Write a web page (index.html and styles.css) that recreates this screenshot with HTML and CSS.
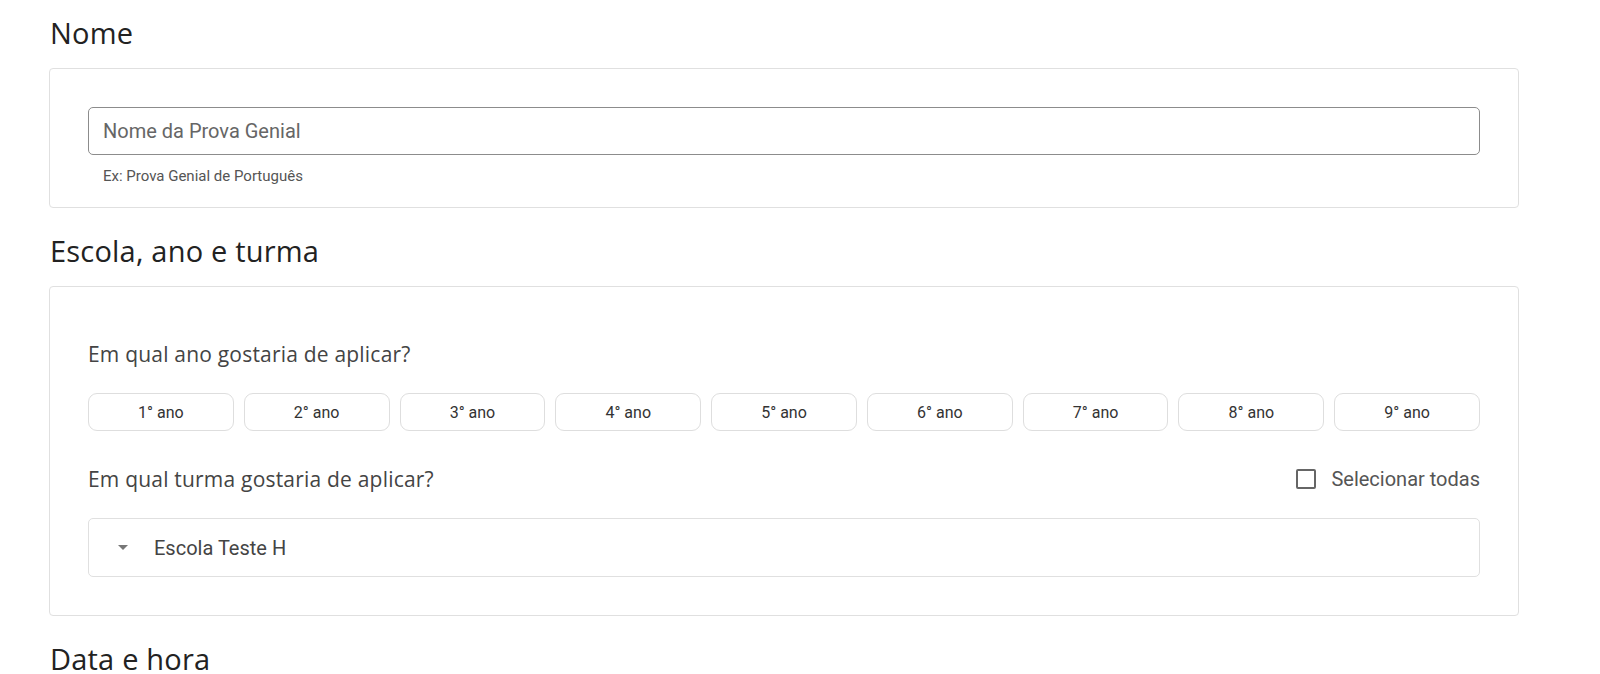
FILE: index.html
```html
<!DOCTYPE html>
<html lang="pt-BR">
<head>
  <meta charset="UTF-8" />
  <title>Prova Genial - Nova prova</title>
  <link rel="stylesheet" href="styles.css">
</head>
<body>

  <div class="page">
    <!-- Nome -->
    <h2 class="section-title">Nome</h2>
    <div class="card">
      <input type="text" class="text-input" placeholder="Nome da Prova Genial">
      <div class="helper">Ex: Prova Genial de Português</div>
    </div>

    <!-- Escola, ano e turma -->
    <h2 class="section-title">Escola, ano e turma</h2>
    <div class="card">
      <p class="question first">Em qual ano gostaria de aplicar?</p>
      <div class="years" id="years"></div>

      <div class="class-row">
        <p class="question">Em qual turma gostaria de aplicar?</p>
        <label class="check-all">
          <span class="checkbox"></span>
          Selecionar todas
        </label>
      </div>

      <div class="school-box">
        <span class="caret"></span>
        <span class="school-name">Escola Teste H</span>
      </div>
    </div>

    <!-- Data e hora -->
    <h2 class="section-title">Data e hora</h2>
  </div>

  <script>
    const years = document.getElementById("years");
    for (let i = 1; i <= 9; i++) {
      const btn = document.createElement("button");
      btn.className = "year-btn";
      btn.textContent = i + "° ano";
      years.appendChild(btn);
    }
  </script>
</body>
</html>
```

FILE: styles.css
```css
body {
  margin: 0;
  background: #fff;
  font-family: "Open Sans", sans-serif;
  overflow: hidden;
}

.page {
  padding: 0 81px 0 49px;
}

.section-title {
  margin: 0 0 0 1px;
  padding: 13px 0 15px 0;
  line-height: 40px;
  font-size: 29px;
  font-weight: 400;
  color: #222;
  letter-spacing: 0.2px;
}

.card {
  border: 1px solid #e0e0e0;
  border-radius: 4px;
  padding: 38px;
  margin-bottom: 10px;
}

.card:first-of-type {
  padding-bottom: 0;
  height: 140px;
  box-sizing: border-box;
}

.text-input {
  display: block;
  width: 100%;
  height: 48px;
  box-sizing: border-box;
  border: 1px solid #8c8c8c;
  border-radius: 5px;
  padding: 0 14px;
  font-family: Roboto, sans-serif;
  font-size: 20px;
  color: #333;
  outline: none;
}

.text-input::placeholder {
  color: #666;
}

.helper {
  margin-top: 12px;
  padding-left: 15px;
  line-height: 18px;
  font-family: Roboto, sans-serif;
  font-size: 15px;
  color: #555;
}

.question {
  margin: 0;
  font-size: 21px;
  line-height: 30px;
  letter-spacing: 0.2px;
  color: #444;
}

.question.first {
  margin-top: 14px;
}

.years {
  display: flex;
  gap: 10px;
  margin-top: 24px;
}

.year-btn {
  flex: 1;
  height: 38px;
  padding: 0;
  background: #fff;
  border: 1px solid #dedede;
  border-radius: 9px;
  font-family: Roboto, sans-serif;
  font-size: 16px;
  color: #333;
  cursor: pointer;
}

.class-row {
  display: flex;
  align-items: center;
  justify-content: space-between;
  margin-top: 33px;
}

.check-all {
  display: flex;
  align-items: center;
  gap: 15px;
  font-family: Roboto, sans-serif;
  font-size: 20px;
  color: #555;
  cursor: pointer;
}

.checkbox {
  width: 16px;
  height: 16px;
  border: 2px solid #666;
  border-radius: 2px;
}

.school-box {
  display: flex;
  align-items: center;
  height: 59px;
  box-sizing: border-box;
  margin-top: 24px;
  border: 1px solid #e0e0e0;
  border-radius: 5px;
  padding-left: 29px;
}

.caret {
  width: 0;
  height: 0;
  border-left: 5px solid transparent;
  border-right: 5px solid transparent;
  border-top: 5px solid #777;
  margin-right: 26px;
}

.school-name {
  font-family: Roboto, sans-serif;
  font-size: 20px;
  color: #444;
}
```
